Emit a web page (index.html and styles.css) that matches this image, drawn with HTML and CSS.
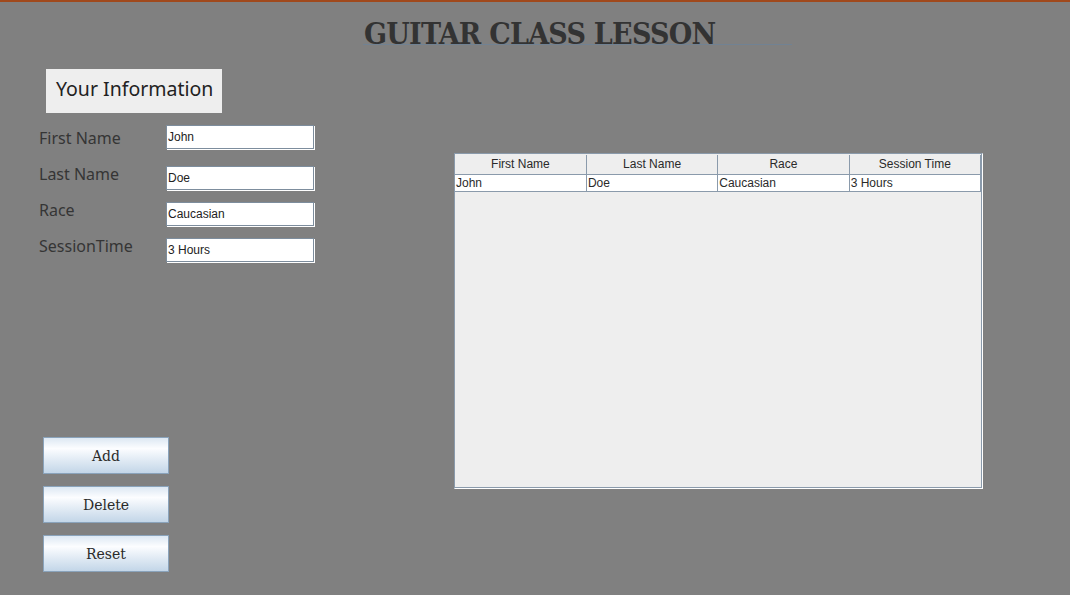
FILE: index.html
```html
<!DOCTYPE html>
<html>
<head>
<meta charset="utf-8">
<link rel="stylesheet" href="styles.css">
</head>
<body>
<header class="header">
  <h1 class="title">GUITAR CLASS LESSON</h1>
</header>
<main class="main">
  <section class="left">
    <div class="info-box">Your Information</div>
    <div class="form">
      <div class="row row-first"><span class="label">First Name</span><input class="field" type="text" value="John"></div>
      <div class="row"><span class="label">Last Name</span><input class="field" type="text" value="Doe"></div>
      <div class="row"><span class="label">Race</span><input class="field" type="text" value="Caucasian"></div>
      <div class="row"><span class="label">SessionTime</span><input class="field" type="text" value="3 Hours"></div>
    </div>
    <div class="buttons">
      <button class="btn">Add</button>
      <button class="btn">Delete</button>
      <button class="btn">Reset</button>
    </div>
  </section>
  <section class="table-panel">
    <table class="grid">
      <thead>
        <tr><th>First Name</th><th>Last Name</th><th>Race</th><th>Session Time</th></tr>
      </thead>
      <tbody>
        <tr><td>John</td><td>Doe</td><td>Caucasian</td><td>3 Hours</td></tr>
      </tbody>
    </table>
  </section>
</main>
</body>
</html>
```
FILE: styles.css
```css
* { box-sizing: border-box; }
html, body { margin: 0; padding: 0; }
body {
  width: 1070px;
  height: 595px;
  overflow: hidden;
  background: #808080;
  border-top: 2px solid #a0491c;
  font-family: "Noto Sans", "DejaVu Sans", sans-serif;
}
.header {
  height: 58px;
  padding-left: 363px;
  padding-top: 21px;
}
.title {
  margin: 0;
  width: 429px;
  font-family: "DejaVu Serif", serif;
  font-stretch: condensed;
  font-weight: bold;
  font-size: 30px;
  letter-spacing: -0.75px;
  line-height: 21px;
  color: #333333;
  border-bottom: 1px solid #718293;
  padding-left: 1px;
}
.main {
  display: flex;
}
.left {
  width: 454px;
  display: flex;
  flex-direction: column;
}
.info-box {
  margin-top: 9px;
  margin-left: 46px;
  width: 176px;
  height: 44px;
  background: #eeeeee;
  color: #222;
  font-size: 19.5px;
  line-height: 40px;
  padding-left: 10px;
}
.form {
  margin-top: 7px;
  margin-left: 39px;
  display: flex;
  flex-direction: column;
}
.row {
  height: 36px;
  display: flex;
  align-items: flex-start;
}
.label {
  width: 127px;
  font-size: 16px;
  line-height: 36px;
  color: #353535;
}
.field {
  margin-top: 10px;
  width: 148px;
  height: 24px;
  border: 1px solid #7d8d9d;
  box-shadow: 1px 1px 0 #ffffff;
  background: #fff;
  font-family: "Liberation Sans", Arial, sans-serif;
  font-size: 12px;
  color: #222;
  padding: 0 1px;
  outline: none;
}
.row-first .field { margin-top: 5px; }
.buttons {
  margin-top: 173px;
  margin-left: 43px;
  display: flex;
  flex-direction: column;
  gap: 12px;
}
.btn {
  width: 126px;
  height: 37px;
  border: 1px solid #8aa3bb;
  background: linear-gradient(to bottom, #dde8f3 0%, #fcfdff 30%, #e3ecf5 60%, #c3d6e8 100%);
  font-family: "DejaVu Serif", serif;
  font-size: 14px;
  color: #2a2a2a;
  padding: 0;
}
.table-panel {
  margin-top: 93px;
  width: 529px;
  height: 336px;
  background: #eeeeee;
  border-top: 1px solid #8a9aab;
  border-left: 1px solid #8a9aab;
  border-right: 1px solid #ffffff;
  border-bottom: 1px solid #ffffff;
  box-shadow: inset -1px -1px 0 #8a9aab;
  padding: 1px 0 0 0;
}
.grid {
  border-collapse: collapse;
  table-layout: fixed;
  width: 526px;
  font-family: "Liberation Sans", Arial, sans-serif;
  font-size: 12px;
  color: #2a2a2a;
}
.grid th {
  height: 19px;
  background: #eeeeee;
  font-weight: normal;
  text-align: center;
  border-right: 1px solid #8a9aab;
  border-bottom: 1px solid #8a9aab;
  padding: 0;
  line-height: 19px;
}
.grid td {
  height: 17px;
  background: #ffffff;
  border-right: 1px solid #8a9aab;
  border-bottom: 1px solid #8a9aab;
  padding: 0 1px;
  line-height: 15px;
}
```
